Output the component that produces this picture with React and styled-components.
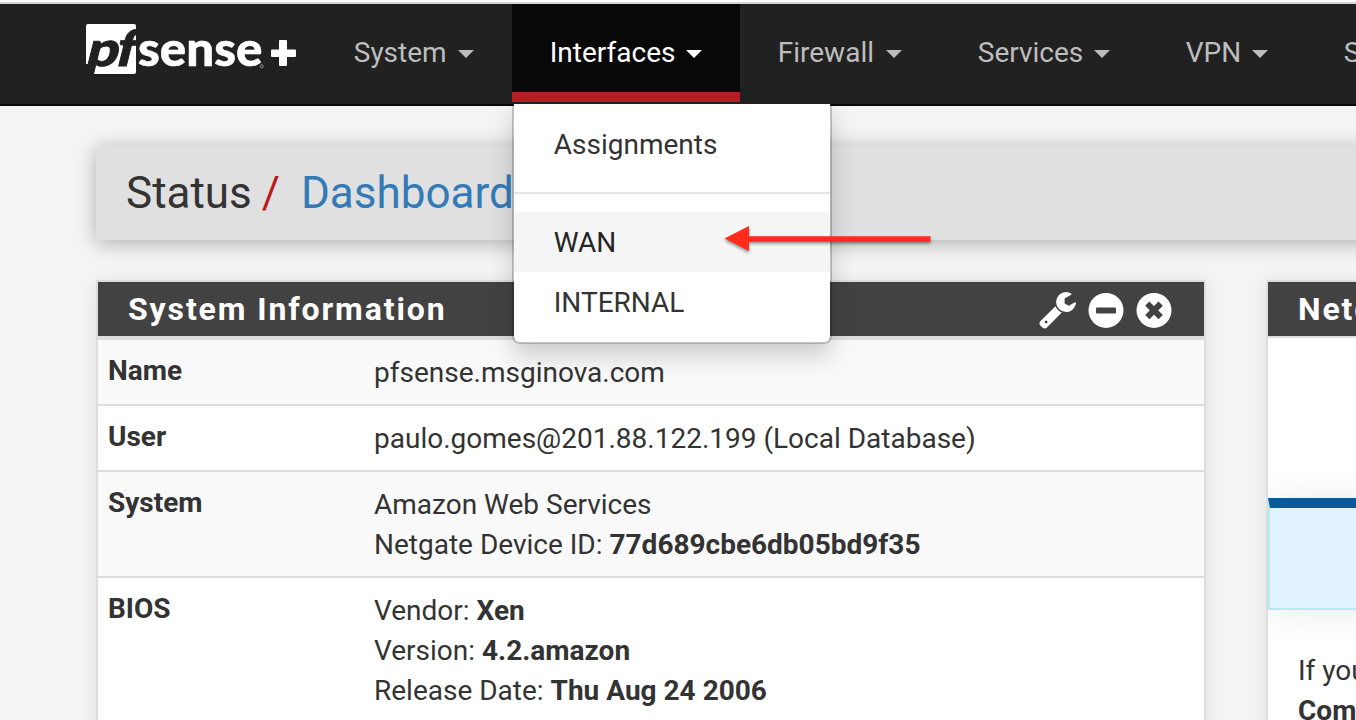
import React from 'react';
import styled, { createGlobalStyle } from 'styled-components';

const GlobalStyle = createGlobalStyle`
  *, *::before, *::after { box-sizing: border-box; }
  html, body { margin: 0; padding: 0; height: 720px; overflow: hidden; }
  body {
    background: #f4f4f4;
    color: #333;
    font: 28px/40px Roboto, "Liberation Sans", sans-serif;
  }
`;

const Page = styled.div`
  width: 1356px;
  height: 720px;
  overflow: hidden;
  position: relative;
`;

const WindowEdge = styled.div`
  height: 4px;
  background: #fff;
  border-bottom: 2px solid #d5d5d9;
`;

const Navbar = styled.nav`
  display: flex;
  height: 102px;
  padding-left: 84px;
  background: #212121;
  border-bottom: 2px solid #080808;
`;

const Brand = styled.a`
  width: 232px;
  flex: none;
  svg { display: block; overflow: visible; }
`;

const NavItem = styled.div`
  position: relative;
  flex: none;
  display: flex;
  height: 98px;
  width: ${p => p.$width}px;
  padding: 29px 38px 0 37.75px;
  justify-content: space-between;
  white-space: nowrap;
  color: ${p => (p.$open ? '#fff' : '#bdbdbd')};
  background: ${p => (p.$open ? '#080808' : 'transparent')};
  border-bottom: ${p => (p.$open ? '10px solid #b42025' : '0')};
`;

const Caret = styled.span`
  width: 16px;
  margin-top: 17px;
  height: 0;
  border: 8px solid transparent;
  border-top-color: currentColor;
  border-bottom: 0;
`;

const Menu = styled.div`
  position: absolute;
  z-index: 5;
  top: 98px;
  left: 0;
  width: 320px;
  padding: 10px 0;
  color: #333;
  background: #fff;
  background-clip: padding-box;
  border: 2px solid rgba(0, 0, 0, 0.2);
  border-radius: 0 0 8px 8px;
  border-top-color: transparent;
  box-shadow: 0 12px 24px rgba(0, 0, 0, 0.175);
`;

const MenuItem = styled.div`
  height: 60px;
  padding: 11px 40px 9px 39.75px;
  color: ${p => (p.$active ? '#262626' : '#333')};
  background: ${p => (p.$active ? '#f5f5f5' : 'transparent')};
`;

const Divider = styled.div`
  height: 2px;
  margin: 18px 0;
  background: #e5e5e5;
`;

const Pointer = styled.svg`
  position: absolute;
  z-index: 6;
  left: 715px;
  top: 218px;
  filter: drop-shadow(0 2px 1.5px rgba(0, 0, 0, 0.4));
`;

const Breadcrumb = styled.header`
  display: flex;
  height: 94px;
  margin: 40px -60px 0 96px;
  padding: 22px 0 0 30px;
  font-size: 44px;
  line-height: 50px;
  background: #e0e0e0;
  border-radius: 4px;
  box-shadow: 0 3px 20px rgba(0, 0, 0, 0.29);
`;

const Slash = styled.span`
  margin: 0 21px 0 10px;
  color: #b71c1c;
`;

const Crumb = styled.a`
  color: #337ab7;
`;

const Columns = styled.main`
  display: flex;
  gap: 60px;
  padding: 40px 0 0 96px;
`;

const Panel = styled.section`
  flex: none;
  width: 1110px;
  height: 460px;
  background: #fff;
  border: 2px solid #ddd;
  box-shadow: 0 2px 16px rgba(0, 0, 0, 0.09);
`;

const PanelHeading = styled.div`
  display: flex;
  justify-content: space-between;
  height: 54px;
  padding: 7px 32px 0 30px;
  color: #fff;
  background: #424242;
  font-size: 32px;
  font-weight: 700;
  letter-spacing: 1.88px;
  white-space: nowrap;
`;

const Tools = styled.div`
  display: flex;
  gap: 12px;
  padding-top: 3px;
  svg { display: block; }
`;

const Table = styled.div`
  border-top: 2px solid #ddd;
`;

const Row = styled.div`
  display: grid;
  grid-template-columns: 266px 1fr;
  padding: 11px 10px 13px;
  border-top: 2px solid #ddd;
  background: ${p => (p.$striped ? '#f9f9f9' : '#fff')};
`;

const Label = styled.div`
  font-weight: 700;
`;

const Value = styled.div`
  padding-top: 2px;
  margin-bottom: -2px;
`;

const SideBody = styled.div`
  height: 402px;
  overflow: hidden;
  border-top: 2px solid #ddd;
`;

const Notice = styled.div`
  height: 112px;
  margin-top: 160px;
  background: #e1f3fe;
  border: 2px solid #b2ebf2;
  border-top: 10px solid #0b5999;
  box-shadow: 0 2px 36px rgba(0, 0, 0, 0.09);
`;

const SideText = styled.p`
  margin: 0;
  padding: 41px 30px 0;
`;

const menus = [
  ['System', 196],
  ['Interfaces', 228],
  ['Firewall', 200],
  ['Services', 208],
  ['VPN', 158],
  ['Status', 180],
];

const Logo = () => (
  <svg width="220" height="98" viewBox="84 4 220 98">
    <path d="M86 26a2 2 0 0 1 2-2h46a2 2 0 0 1 2 2v46a2 2 0 0 1-2 2H91.300l3-10H86z" fill="#fff" />
    <g fontFamily="Lato" fontWeight="900">
      <g fill="#212121" stroke="#212121" strokeWidth="0.900" transform="translate(0 65.500) skewX(-14)">
        <text x="84.500" y="0" fontSize="48" textLength="32" lengthAdjust="spacingAndGlyphs">p</text>
        <text x="113.500" y="0" fontSize="50" textLength="20" lengthAdjust="spacingAndGlyphs">f</text>
      </g>
      <text x="138" y="65.500" fontSize="48" fill="#fff" stroke="#fff" strokeWidth="0.500" textLength="124.500" lengthAdjust="spacingAndGlyphs">sense</text>
    </g>
    <circle cx="261.700" cy="66.300" r="1.500" fill="none" stroke="#999" />
    <path d="M280 40h6q1 0 1 1v8.500h8q1 0 1 1v5.500q0 1-1 1h-8v8q0 1-1 1h-6q-1 0-1-1v-8h-7q-1 0-1-1v-5.500q0-1 1-1h7V41q0-1 1-1z" fill="#fff" />
  </svg>
);

const Wrench = () => (
  <svg width="37" height="40" viewBox="0 128 1664 1792">
    <path fill="#fff" d="M384 1472q0-26-19-45t-45-19-45 19-19 45 19 45 45 19 45-19 19-45zm644-420l-682 682q-37 37-90 37-52 0-91-37L59 1626q-38-36-38-90 0-53 38-91l681-681q39 98 114.500 173.500T1028 1052zm634-435q0 39-23 106-47 134-164.500 217.500T1216 1024q-185 0-316.500-131.500T768 576t131.500-316.500T1216 128q58 0 121.500 16.500T1445 191q16 11 16 28t-16 28l-293 169v224l193 107q5-3 79-48.500t135.500-81T1630 582q15 0 23.500 10t8.500 25z" />
  </svg>
);

const Minus = () => (
  <svg width="36" height="36" viewBox="0 0 36 36">
    <circle cx="18" cy="18.400" r="17.500" fill="#fff" />
    <rect x="8" y="15.600" width="20" height="6" rx="1" fill="#424242" />
  </svg>
);

const Close = () => (
  <svg width="36" height="36" viewBox="0 0 36 36">
    <circle cx="18" cy="18.400" r="17.500" fill="#fff" />
    <path d="M11.300 11.700l13.400 13.400M24.700 11.700l-13.400 13.400" stroke="#424242" strokeWidth="6" />
  </svg>
);

export default function App() {
  return (
    <Page>
      <GlobalStyle />
      <WindowEdge />
      <Navbar>
        <Brand><Logo /></Brand>
        {menus.map(([name, width]) => (
          <NavItem key={name} $width={width} $open={name === 'Interfaces'}>
            <span>{name}</span>
            <Caret />
            {name === 'Interfaces' && (
              <Menu>
                <MenuItem>Assignments</MenuItem>
                <Divider />
                <MenuItem $active>WAN</MenuItem>
                <MenuItem>INTERNAL</MenuItem>
              </Menu>
            )}
          </NavItem>
        ))}
      </Navbar>
      <Breadcrumb>
        <span>Status</span>
        <Slash>/</Slash>
        <Crumb>Dashboard</Crumb>
      </Breadcrumb>
      <Columns>
        <Panel>
          <PanelHeading>
            <span>System Information</span>
            <Tools><Wrench /><Minus /><Close /></Tools>
          </PanelHeading>
          <Table>
            <Row $striped><Label>Name</Label><Value>pfsense.msginova.com</Value></Row>
            <Row><Label>User</Label><Value>paulo.gomes@201.88.122.199 (Local Database)</Value></Row>
            <Row $striped>
              <Label>System</Label>
              <Value>Amazon Web Services<br />Netgate Device ID: <b>77d689cbe6db05bd9f35</b></Value>
            </Row>
            <Row>
              <Label>BIOS</Label>
              <Value>
                Vendor: <b>Xen</b><br />Version: <b>4.2.amazon</b><br />Release Date: <b>Thu Aug 24 2006</b>
              </Value>
            </Row>
          </Table>
        </Panel>
        <Panel>
          <PanelHeading><span>Netgate Services And Support</span></PanelHeading>
          <SideBody>
            <Notice />
            <SideText>If you purchased<br /><b>Community Support</b></SideText>
          </SideBody>
        </Panel>
      </Columns>
      <Pointer width="225" height="45" viewBox="715 218 225 45">
        <path d="M724.500 238.500L749 226v10.300h181.500v5.400H749v9.300z" fill="#ff2b1c" />
      </Pointer>
    </Page>
  );
}
